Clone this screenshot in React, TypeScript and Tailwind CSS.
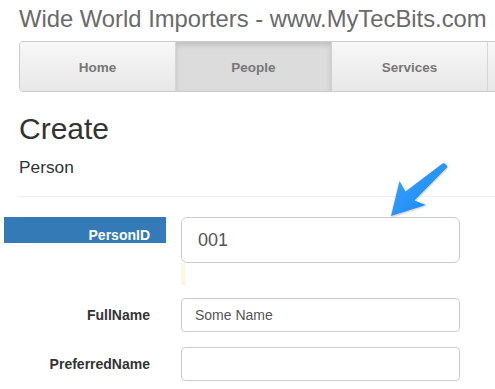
import React from "react";

const tabs = ["Home", "People", "Services", ""];

function Arrow() {
  // blue callout arrow drawn over the form
  return (
    <svg
      className="absolute left-0 top-0 pointer-events-none"
      width="495"
      height="389"
      viewBox="0 0 495 389"
    >
      <defs>
        <linearGradient id="arrowFill" x1="0" y1="0" x2="1" y2="1">
          <stop offset="0" stopColor="#3fa4ff" />
          <stop offset="1" stopColor="#1585f2" />
        </linearGradient>
        <filter id="arrowShadow" x="-20%" y="-20%" width="140%" height="140%">
          <feDropShadow dx="0" dy="1" stdDeviation="1.2" floodColor="#000" floodOpacity="0.25" />
        </filter>
      </defs>
      <path
        d="M442.5,163.5 Q445.5,162.5 447.5,167 L414.5,200.5 L426,205 L391,216 L399.5,181 L405.5,191.5 Z"
        fill="url(#arrowFill)"
        filter="url(#arrowShadow)"
        strokeLinejoin="round"
      />
    </svg>
  );
}

function Row({
  label,
  children,
  highlight,
}: {
  label: string;
  children: React.ReactNode;
  highlight?: boolean;
}) {
  return (
    <div className="flex items-center">
      <div
        className={
          highlight
            ? "ml-[4px] w-[162px] h-[26px] self-start bg-[#337ab7] text-white text-right pr-[16px] pt-[9.5px] leading-[16px] text-[14px] font-bold"
            : "ml-[4px] w-[162px] text-[#333] text-right pr-[16px] leading-[16px] text-[14px] font-bold"
        }
      >
        {label}
      </div>
      <div className="ml-[15px]">{children}</div>
    </div>
  );
}

export default function App() {
  return (
    <div
      className="relative w-[495px] h-[389px] overflow-hidden bg-white"
      style={{ fontFamily: '"Liberation Sans", Arial, sans-serif' }}
    >
      {/* site title */}
      <div className="h-[41px] pl-[19px] pt-[4.5px] text-[23.8px] leading-[28px] text-[#6a6a6a] whitespace-nowrap">
        Wide World Importers - www.MyTecBits.com
      </div>

      {/* nav bar */}
      <div className="ml-[19px] flex w-[700px] h-[51px] border border-[#cccccc] rounded-l-[4px] overflow-hidden">
        {tabs.map((t, i) => (
          <div
            key={i}
            className={
              t === "People"
                ? "w-[156px] shrink-0 flex items-center justify-center pt-[3px] border-r border-[#d0d0d0] bg-[#dcdcdc] shadow-[inset_0_3px_5px_rgba(0,0,0,0.13)] text-[13.5px] font-bold text-[#777]"
                : "w-[156px] shrink-0 flex items-center justify-center pt-[3px] border-r border-[#d6d6d6] bg-linear-to-b from-[#f7f7f7] to-[#e8e8e8] text-[13.5px] font-bold text-[#777]"
            }
          >
            {t}
          </div>
        ))}
      </div>

      {/* page heading */}
      <div className="pl-[19px] mt-[20px] text-[30px] leading-[34px] text-[#333]">Create</div>
      <div className="pl-[19px] mt-[11px] text-[17.3px] leading-[20px] text-[#333]">Person</div>
      <div className="ml-[19px] mt-[19px] h-px bg-[#eeeeee]" />

      {/* form */}
      <div className="mt-[20px]">
        <Row label="PersonID" highlight>
          <div>
            <div className="w-[279px] h-[46px] border border-[#cccccc] rounded-[6px] flex items-center pl-[16px] text-[18px] text-[#555]">
              001
            </div>
            <div className="w-[4px] h-[22px] bg-[#fcf6dd]" />
          </div>
        </Row>
        <div className="mt-[13px]">
          <Row label="FullName">
            <div className="w-[279px] h-[34px] border border-[#cccccc] rounded-[4px] flex items-center pl-[13px] text-[14px] text-[#555]">
              Some Name
            </div>
          </Row>
        </div>
        <div className="mt-[15px]">
          <Row label="PreferredName">
            <div className="w-[279px] h-[34px] border border-[#cccccc] rounded-[4px]" />
          </Row>
        </div>
      </div>

      <Arrow />
    </div>
  );
}
